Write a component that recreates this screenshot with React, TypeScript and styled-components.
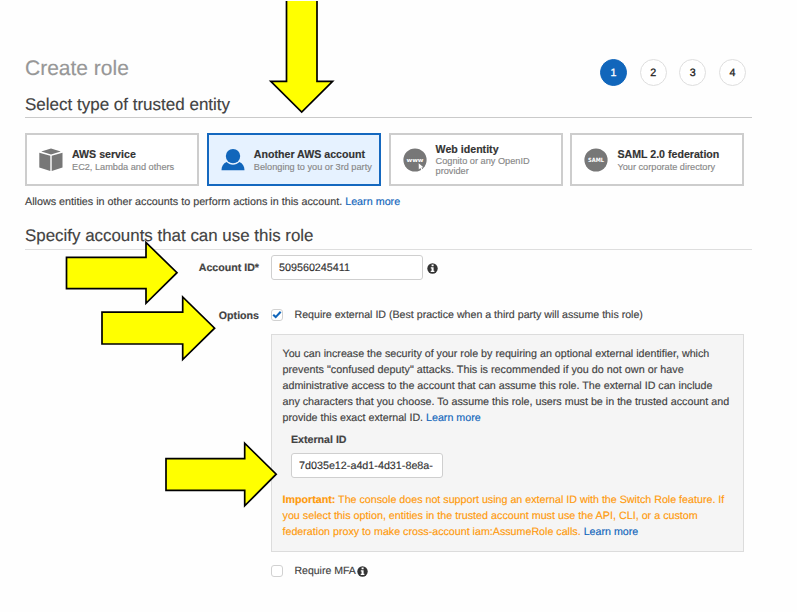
import React from 'react';
import styled, { createGlobalStyle, css } from 'styled-components';

const GlobalStyle = createGlobalStyle`
  * { box-sizing: border-box; }
  body {
    margin: 0;
    background: #fefefe;
    color: #424242;
    font-family: "Liberation Sans", Arial, Helvetica, sans-serif;
    font-size: 10.7px;
    line-height: 16px;
    text-rendering: geometricPrecision;
    -webkit-text-stroke: 0.15px;
  }
`;

const Page = styled.main`
  position: relative;
  width: 797px;
  height: 612px;
  padding: 54px 45px 0 25px;
  overflow: hidden;
`;

const Header = styled.header`
  display: flex;
  justify-content: space-between;
  height: 37px;
  padding-right: 6px;
`;

const Title = styled.h1`
  margin: 0;
  color: #979797;
  font-size: 21px;
  font-weight: 400;
  line-height: 29px;
`;

const Steps = styled.ol`
  display: flex;
  gap: 12.7px;
  margin: 5px 0 0;
  padding: 0;
  list-style: none;
`;

const Step = styled.li<{ $active?: boolean }>`
  width: 27px;
  height: 27px;
  border: 1px solid ${(p) => (p.$active ? '#1166bb' : '#dedede')};
  border-radius: 50%;
  background: ${(p) => (p.$active ? '#1166bb' : '#fff')};
  color: ${(p) => (p.$active ? '#fff' : '#222')};
  font-size: 10.7px;
  line-height: 26px;
  text-align: center;
  -webkit-text-stroke: 0.3px;
`;

const SectionTitle = styled.h2<{ $light?: boolean }>`
  height: 27px;
  margin: 0;
  border-bottom: 1px solid ${(p) => (p.$light ? '#dedede' : '#cacaca')};
  font-size: ${(p) => (p.$light ? '16.92px' : '17px')};
  font-weight: 400;
  line-height: ${(p) => (p.$light ? '25px' : '27px')};
`;

const Cards = styled.div`
  display: grid;
  grid-template-columns: repeat(4, 174px);
  gap: 7.8px;
  margin: 15px 0 8px;
`;

const Card = styled.button<{ $selected?: boolean }>`
  display: flex;
  align-items: center;
  height: 53px;
  padding: 0 0 0 12px;
  border: 2px solid #cdcdcd;
  background: #fff;
  color: #777;
  font: inherit;
  text-align: left;
  ${(p) =>
    p.$selected &&
    css`
      border-color: #1468bf;
      background: #e6f2ff;
      color: #1166bb;
    `}
`;

const CardIcon = styled.svg`
  flex: none;
  width: 24px;
  height: 24px;
  margin-right: 9px;
`;

const CardText = styled.div<{ $tight?: boolean }>`
  display: flex;
  flex-direction: column;
  padding-top: ${(p) => (p.$tight ? '0' : '2px')};
  white-space: nowrap;
`;

const CardName = styled.strong`
  color: #333;
  font-size: 10.64px;
  line-height: 13px;
`;

const CardNote = styled.span<{ $tight?: boolean }>`
  color: #888;
  font-size: 9.2px;
  line-height: ${(p) => (p.$tight ? '10px' : '12px')};
  white-space: pre-line;
`;

const Description = styled.p`
  height: 16px;
  margin: 0 0 13px;
  font-size: 10.78px;
  white-space: nowrap;
`;

const Link = styled.a`
  color: #1166bb;
`;

const Form = styled.form`
  display: grid;
  grid-template-columns: 234px 473px;
  column-gap: 12px;
  padding-top: 5px;
`;

const Label = styled.label`
  font-size: 10.64px;
  font-weight: 700;
  text-align: right;
  line-height: 27px;
`;

const FieldRow = styled.div`
  display: flex;
  align-items: center;
  height: 25px;
  margin-bottom: 23px;
`;

const TextInput = styled.input`
  display: block;
  width: 152px;
  height: 25px;
  padding: 0 7px;
  border: 1px solid #cfcfcf;
  border-radius: 3px;
  outline: none;
  background: #fff;
  color: #333;
  font: inherit;
  font-size: 10.75px;
  -webkit-text-stroke: inherit;
  text-rendering: inherit;
`;

const InfoMark = styled.svg<{ $spaced?: boolean }>`
  width: 11px;
  height: 11px;
  margin: 1px 0 0 ${(p) => (p.$spaced ? '4px' : '1px')};
`;

const OptionRow = styled.div<{ $last?: boolean }>`
  display: flex;
  align-items: center;
  height: 24px;
  margin-bottom: 7px;
  font-size: ${(p) => (p.$last ? '10.5px' : '10.64px')};
  white-space: nowrap;
`;

const CheckBox = styled.span`
  display: grid;
  place-items: center;
  width: 12px;
  height: 12px;
  margin: 0 11.5px 1px 0;
  border: 1px solid #d1d1d1;
  border-radius: 3px;
  background: #fff;
  svg { width: 10px; height: 9px; }
`;

const Panel = styled.section`
  height: 218px;
  margin-bottom: 7px;
  padding: 11px 11px 0 10.5px;
  border: 1px solid #dcdcdc;
  background: #f5f5f5;
`;

const Paragraph = styled.p<{ $warning?: boolean }>`
  margin: 0;
  color: ${(p) => (p.$warning ? '#ff9a0b' : 'inherit')};
  white-space: nowrap;
`;

const Line = styled.span<{ $size?: number }>`
  display: block;
  height: 16px;
  font-size: ${(p) => p.$size ?? 10.7}px;
`;

const ExternalField = styled.div`
  display: flex;
  flex-direction: column;
  gap: 5px;
  margin: 6px 0 14px 8.5px;
`;

const ExternalLabel = styled.label`
  font-size: 10.64px;
  font-weight: 700;
`;

const Pointer = styled.svg`
  position: absolute;
  inset: 0;
  width: 797px;
  height: 612px;
  pointer-events: none;
`;

const Info = ({ spaced }: { spaced?: boolean }) => (
  <InfoMark $spaced={spaced} viewBox="0 0 11 11" aria-label="Info">
    <circle cx="5.5" cy="5.5" r="5.2" fill="#333" />
    <path d="M4.6 1.6h2v1.7h-2zM3.8 4.2h2.8v3.6h.8V9H3.7V7.8h.9V5.4h-.8z" fill="#fff" />
  </InfoMark>
);

const BoxIcon = () => (
  <CardIcon viewBox="0 0 24 24" fill="currentColor">
    <path d="M12 .4 21.8 3.4 12 6.4 2.2 3.4zM.3 4.7l11 3.1v15.2L.3 19.6zM23.5 4.7 12.7 7.8v15.2l10.8-3.4z" />
  </CardIcon>
);

const PersonIcon = () => (
  <CardIcon viewBox="0 0 24 24" fill="currentColor">
    <circle cx="12" cy="8.1" r="7.2" />
    <path d="M.5 22.3c0-4 1.8-6.7 5.1-8.2 3.2 3.4 9.6 3.4 12.8 0 3.3 1.5 5.1 4.2 5.1 8.2z" />
  </CardIcon>
);

const BadgeIcon = ({ text, cursor }: { text: string; cursor?: boolean }) => (
  <CardIcon viewBox="0 0 24 24">
    <circle cx="12" cy="12" r="11.6" fill="currentColor" />
    <text
      x="12" y="14" textAnchor="middle" fill="#fff"
      fontFamily="DejaVu Sans" fontSize="5.7" fontWeight="700"
      textLength={cursor ? 17 : 16} lengthAdjust="spacingAndGlyphs"
    >
      {text}
    </text>
    {cursor && <path d="m15.7 15.2 4.7 4-2 .2 1.3 2.2-1.3.7-1.1-2.2-1.5 1.4z" fill="#fff" />}
  </CardIcon>
);

const cards = [
  { name: 'AWS service', note: 'EC2, Lambda and others', icon: <BoxIcon /> },
  { name: 'Another AWS account', note: 'Belonging to you or 3rd party', icon: <PersonIcon />, selected: true },
  { name: 'Web identity', note: 'Cognito or any OpenID\nprovider', icon: <BadgeIcon text="www" cursor />, tight: true },
  { name: 'SAML 2.0 federation', note: 'Your corporate directory', icon: <BadgeIcon text="SAML" /> },
];

const arrows = [
  'M286.5 1V81.3H270.8L301.7 112 332.6 81.3H317V1',
  'M66.5 257.3H146V242.5L177 272.7 146 303.3V288.7H66.5Z',
  'M102 312.2H182.7V297L214.6 328.2 182.7 359.5V344H102Z',
  'M166 458.6H244.7V443.2L276.2 474.2 244.7 505.8V490.3H166Z',
];

export default function App() {
  return (
    <>
      <GlobalStyle />
      <Page>
        <Header>
          <Title>Create role</Title>
          <Steps>
            {[1, 2, 3, 4].map((n) => (
              <Step key={n} $active={n === 1}>{n}</Step>
            ))}
          </Steps>
        </Header>

        <SectionTitle>Select type of trusted entity</SectionTitle>
        <Cards>
          {cards.map((c) => (
            <Card key={c.name} type="button" $selected={c.selected}>
              {c.icon}
              <CardText $tight={c.tight}>
                <CardName>{c.name}</CardName>
                <CardNote $tight={c.tight}>{c.note}</CardNote>
              </CardText>
            </Card>
          ))}
        </Cards>
        <Description>
          Allows entities in other accounts to perform actions in this account. <Link>Learn more</Link>
        </Description>

        <SectionTitle $light>Specify accounts that can use this role</SectionTitle>
        <Form>
          <Label>Account ID*</Label>
          <FieldRow>
            <TextInput readOnly value="509560245411" />
            <Info spaced />
          </FieldRow>

          <Label>Options</Label>
          <div>
            <OptionRow>
              <CheckBox>
                <svg viewBox="0 0 10 9">
                  <path d="m1.2 4.7 2.5 2.4 5-5.4" fill="none" stroke="#1166bb" strokeWidth="2.1" />
                </svg>
              </CheckBox>
              Require external ID (Best practice when a third party will assume this role)
            </OptionRow>
            <Panel>
              <Paragraph>
                <Line $size={10.69}>You can increase the security of your role by requiring an optional external identifier, which</Line>
                <Line $size={10.8}>prevents "confused deputy" attacks. This is recommended if you do not own or have</Line>
                <Line>administrative access to the account that can assume this role. The external ID can include</Line>
                <Line $size={10.72}>any characters that you choose. To assume this role, users must be in the trusted account and</Line>
                <Line $size={10.68}>provide this exact external ID. <Link>Learn more</Link></Line>
              </Paragraph>
              <ExternalField>
                <ExternalLabel>External ID</ExternalLabel>
                <TextInput readOnly value="7d035e12-a4d1-4d31-8e8a-" />
              </ExternalField>
              <Paragraph $warning>
                <Line><strong>Important:</strong> The console does not support using an external ID with the Switch Role feature. If</Line>
                <Line $size={10.76}>you select this option, entities in the trusted account must use the API, CLI, or a custom</Line>
                <Line>federation proxy to make cross-account iam:AssumeRole calls. <Link>Learn more</Link></Line>
              </Paragraph>
            </Panel>
            <OptionRow $last>
              <CheckBox />
              Require MFA<Info />
            </OptionRow>
          </div>
        </Form>

        <Pointer viewBox="0 0 797 612" fill="#ffff00" stroke="#000" strokeWidth="1.7">
          {arrows.map((d) => (
            <path key={d} d={d} />
          ))}
        </Pointer>
      </Page>
    </>
  );
}
